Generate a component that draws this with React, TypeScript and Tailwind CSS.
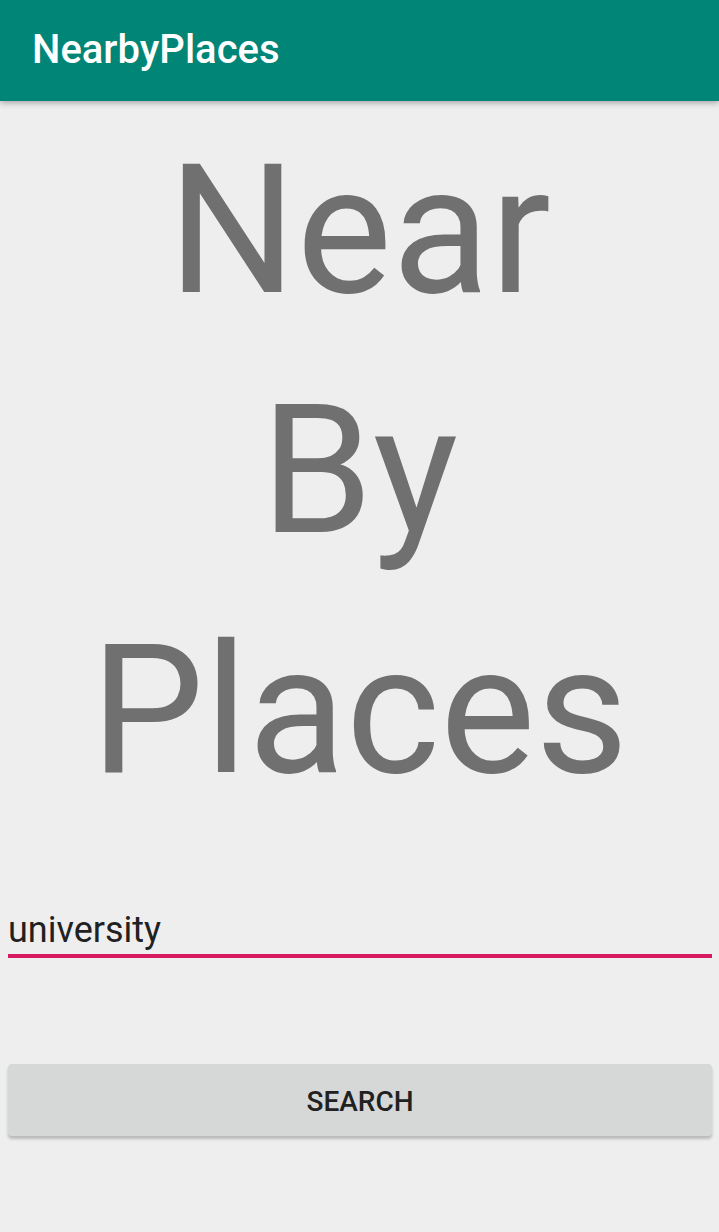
import { useState } from "react";

const roboto = { fontFamily: "Roboto, 'Noto Sans', sans-serif" };

export default function App() {
  const [query, setQuery] = useState("university");

  return (
    <div
      style={roboto}
      className="min-h-[1232px] w-full bg-[#eeeeee]"
    >
      {/* app bar */}
      <header className="relative z-10 h-[101px] bg-[#008577] shadow-[0_2px_6px_rgba(0,0,0,0.3)]">
        <h1 className="pl-[32px] pt-[26px] text-[40px] leading-[47px] font-medium text-white">
          NearbyPlaces
        </h1>
      </header>

      {/* big title */}
      <div className="mt-[10px] text-center text-[180px] leading-[240px] text-[#707070]">
        <p>Near</p>
        <p>By</p>
        <p>Places</p>
      </div>

      {/* search input */}
      <div className="mt-[77px] ml-2 mr-[7px]">
        <input
          value={query}
          onChange={(e) => setQuery(e.target.value)}
          className="block h-[42px] w-full bg-transparent pl-0 pt-[1px] text-[36px] leading-[42px] text-[#212121] outline-none"
          style={roboto}
        />
        <div className="mt-[4px] h-[4px] bg-[#d81b60]" />
      </div>

      {/* search button */}
      <div className="mt-[106px] ml-2 mr-[7px]">
        <button
          className="flex h-[72px] w-full items-center justify-center rounded-[4px] bg-[#d6d7d7] pt-[4px] text-[28px] font-medium text-[#212121] shadow-[0_3px_3px_rgba(0,0,0,0.22)]"
          style={roboto}
        >
          SEARCH
        </button>
      </div>
    </div>
  );
}
